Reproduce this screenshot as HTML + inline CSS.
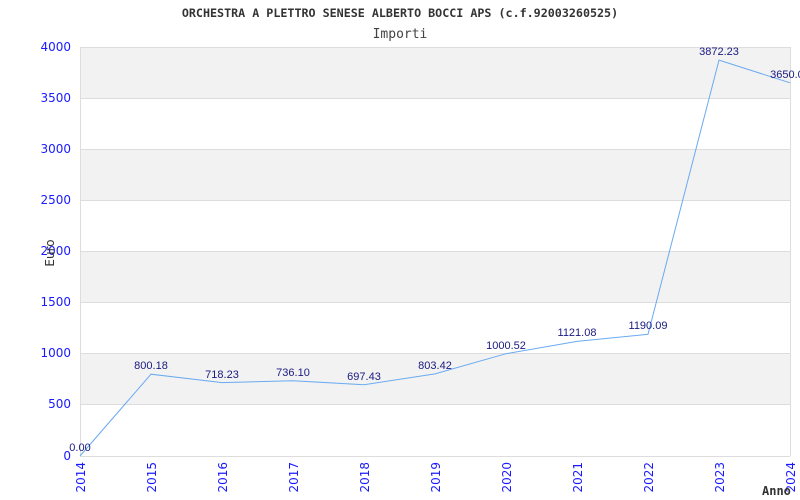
<!DOCTYPE html>
<html><head><style>html,body{margin:0;padding:0;background:#fff}svg{display:block}</style></head>
<body>
<svg width="800" height="500" xmlns="http://www.w3.org/2000/svg">
<rect width="800" height="500" fill="#fff"/>
<text x="400" y="17" text-anchor="middle" font-family="DejaVu Sans Mono, Liberation Mono, monospace" font-weight="bold" font-size="11.7" fill="#333">ORCHESTRA A PLETTRO SENESE ALBERTO BOCCI APS (c.f.92003260525)</text>
<text x="400" y="38" text-anchor="middle" font-family="DejaVu Sans Mono, Liberation Mono, monospace" font-size="13" fill="#444">Importi</text>
<g fill="#f2f2f2">
<rect x="80" y="47" width="710" height="51"/>
<rect x="80" y="149" width="710" height="51"/>
<rect x="80" y="251" width="710" height="51"/>
<rect x="80" y="353" width="710" height="51"/>
</g>
<g stroke="#ddd" stroke-width="1">
<line x1="80" y1="47.5" x2="790" y2="47.5"/>
<line x1="80" y1="98.5" x2="790" y2="98.5"/>
<line x1="80" y1="149.5" x2="790" y2="149.5"/>
<line x1="80" y1="200.5" x2="790" y2="200.5"/>
<line x1="80" y1="251.5" x2="790" y2="251.5"/>
<line x1="80" y1="302.5" x2="790" y2="302.5"/>
<line x1="80" y1="353.5" x2="790" y2="353.5"/>
<line x1="80" y1="404.5" x2="790" y2="404.5"/>
<line x1="80" y1="456.5" x2="790" y2="456.5"/>
<line x1="80.5" y1="47" x2="80.5" y2="456"/>
<line x1="790.5" y1="47" x2="790.5" y2="456"/>
</g>
<g font-family="DejaVu Sans, Liberation Sans, sans-serif" font-size="12" fill="#1a1aff" text-anchor="end">
<text x="71" y="51">4000</text>
<text x="71" y="102">3500</text>
<text x="71" y="153">3000</text>
<text x="71" y="204">2500</text>
<text x="71" y="255">2000</text>
<text x="71" y="306">1500</text>
<text x="71" y="357">1000</text>
<text x="71" y="408">500</text>
<text x="71" y="460">0</text>
</g>
<text transform="translate(54,253) rotate(-90)" text-anchor="middle" font-family="DejaVu Sans, Liberation Sans, sans-serif" font-size="12" fill="#333">Euro</text>
<g font-family="DejaVu Sans, Liberation Sans, sans-serif" font-size="12" fill="#1a1aff" text-anchor="end">
<text transform="translate(85,462) rotate(-90)">2014</text>
<text transform="translate(156,462) rotate(-90)">2015</text>
<text transform="translate(227,462) rotate(-90)">2016</text>
<text transform="translate(298,462) rotate(-90)">2017</text>
<text transform="translate(369,462) rotate(-90)">2018</text>
<text transform="translate(440,462) rotate(-90)">2019</text>
<text transform="translate(511,462) rotate(-90)">2020</text>
<text transform="translate(582,462) rotate(-90)">2021</text>
<text transform="translate(653,462) rotate(-90)">2022</text>
<text transform="translate(724,462) rotate(-90)">2023</text>
<text transform="translate(795,462) rotate(-90)">2024</text>
</g>
<text x="762" y="495" font-family="DejaVu Sans Mono, Liberation Mono, monospace" font-weight="bold" font-size="12" fill="#333">Anno</text>
<polyline fill="none" stroke="#6aaaf0" stroke-width="1" points="80,456 151,374.2 222,382.6 293,380.7 364,384.7 435,373.9 506,353.7 577,341.4 648,334.3 719,60.1 790,82.8"/>
<g font-family="Liberation Sans, Arial, sans-serif" font-size="11" fill="#1a1a80" text-anchor="middle">
<text x="80" y="451">0.00</text>
<text x="151" y="369">800.18</text>
<text x="222" y="378">718.23</text>
<text x="293" y="376">736.10</text>
<text x="364" y="380">697.43</text>
<text x="435" y="369">803.42</text>
<text x="506" y="349">1000.52</text>
<text x="577" y="336">1121.08</text>
<text x="648" y="329">1190.09</text>
<text x="719" y="55">3872.23</text>
<text x="790" y="78">3650.00</text>
</g>
</svg>
</body></html>
